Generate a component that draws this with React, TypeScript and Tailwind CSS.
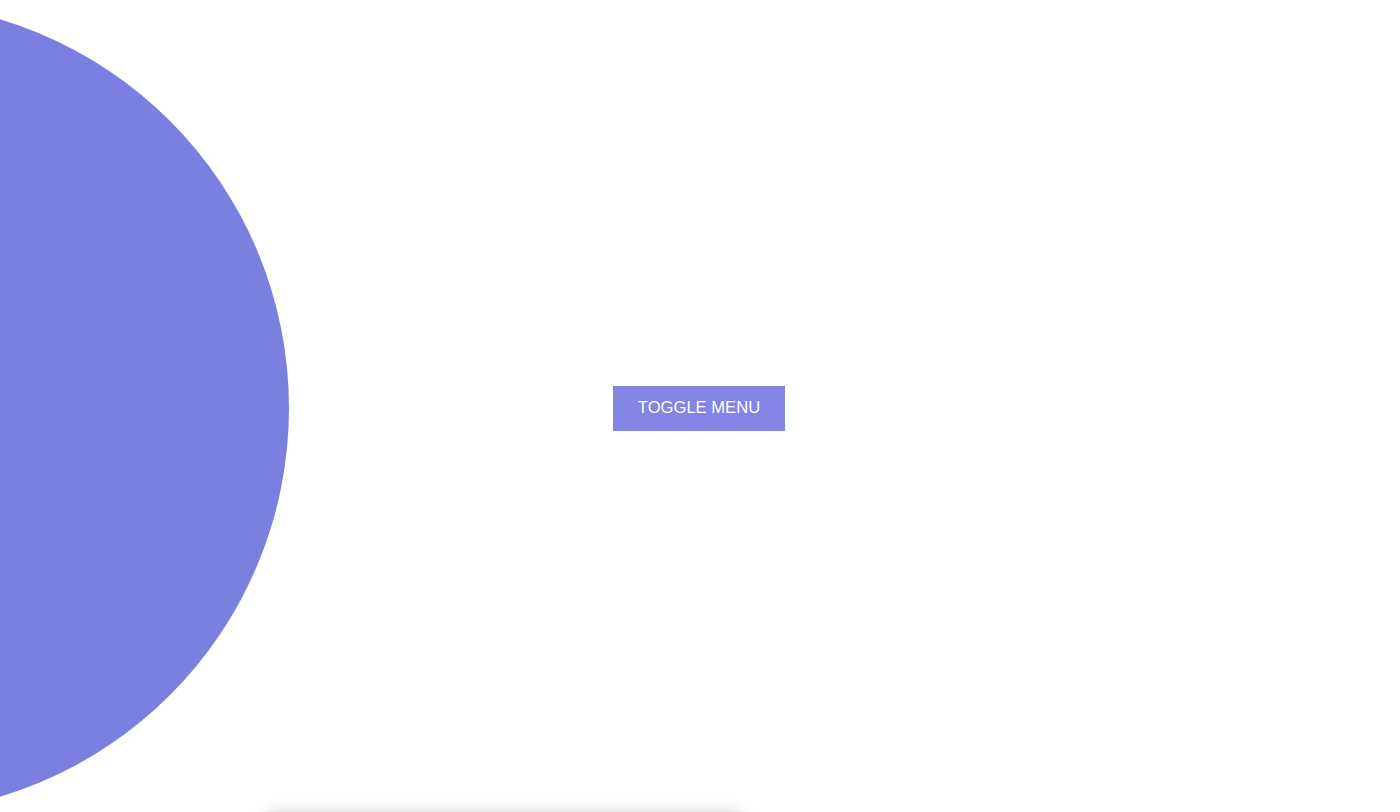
import React, { useState } from 'react';

const App: React.FC = () => {
    const [open, setOpen] = useState(false);

    return (
        <div className="relative h-[812px] w-full overflow-hidden bg-white font-['Liberation_Sans',Arial,sans-serif]">
            {/* decorative circle on the left */}
            <div className="absolute left-[-523px] top-[2px] h-[812px] w-[812px] rounded-full bg-[#7b7fe0]" />

            <div className="flex h-full items-center justify-center pt-[5px] pr-[2px]">
                <button
                    type="button"
                    onClick={() => setOpen(prev => !prev)}
                    className="relative flex h-[45px] w-[172px] items-center justify-center bg-[#8285e3] text-[16.6px] text-white"
                >
                    TOGGLE MENU
                </button>
            </div>

            {/* menu panel sitting just below the fold */}
            <div
                className={`absolute left-[266px] top-[812px] h-[300px] w-[476px] bg-white shadow-[0_0_12px_rgba(0,0,0,0.18)] ${open ? 'hidden' : ''}`}
            />
        </div>
    );
};

export default App;
